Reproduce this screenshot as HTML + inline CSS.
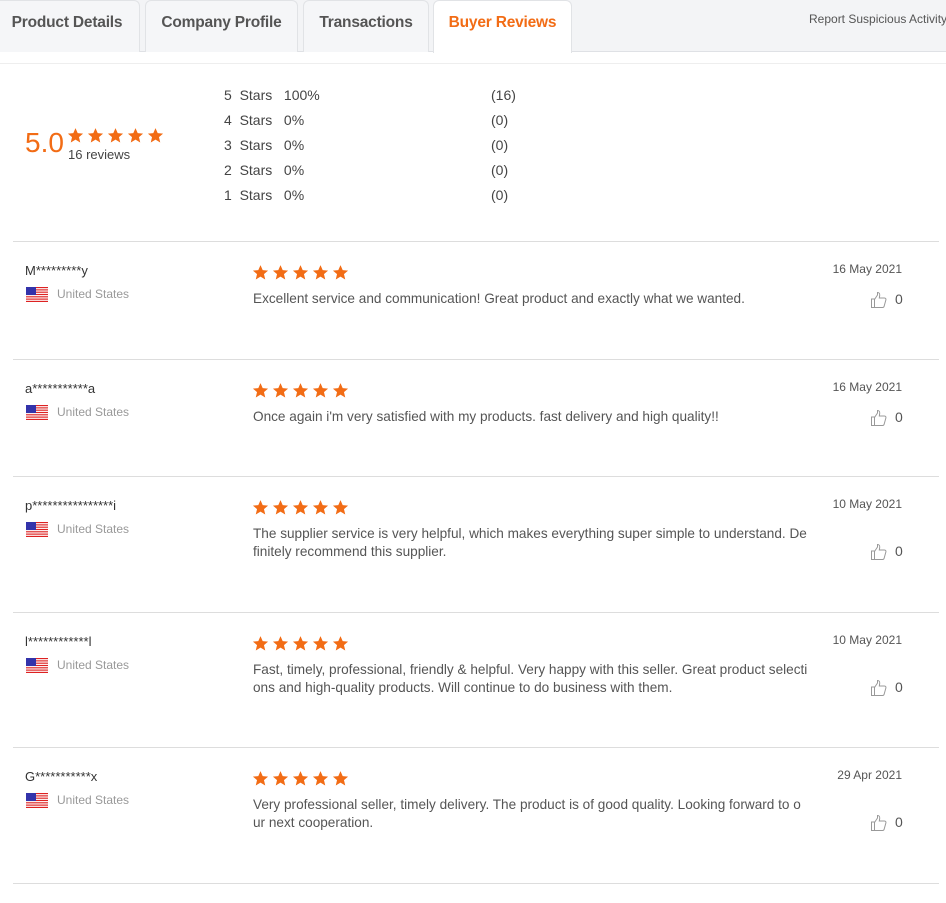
<!DOCTYPE html>
<html><head><meta charset="utf-8"><style>
*{margin:0;padding:0;box-sizing:border-box}
body{width:946px;height:903px;background:#fff;font-family:"Liberation Sans",Arial,sans-serif;position:relative;overflow:hidden;color:#333}
.a{position:absolute;white-space:nowrap}
.topbar{position:absolute;left:0;top:0;width:946px;height:52px;background:#f3f4f6;border-bottom:1px solid #dfe1e5}
.tab{position:absolute;top:0;height:52px;background:#f5f6f8;border:1px solid #e1e3e6;border-bottom:none;border-radius:6px 6px 0 0;font-weight:bold;font-size:15.5px;color:#555;text-align:center;line-height:44px;letter-spacing:-0.2px}
.tab.on{background:#fff;color:#f26c15;height:53px}
.line{position:absolute;left:13px;width:926px;height:1px;background:#ddd}
.stars svg{display:inline-block;margin-right:3px}
.nm{font-size:13px;color:#333}
.ct{font-size:12px;color:#999}
.tx{font-size:13.6px;color:#555;line-height:18px}
.dt{font-size:12px;color:#555;right:44px}
.lk{font-size:14px;color:#555}
.dist{font-size:14px;color:#444}
</style></head><body>
<div class="topbar"></div>
<div class="tab" style="left:-6px;width:146px">Product Details</div>
<div class="tab" style="left:145px;width:153px">Company Profile</div>
<div class="tab" style="left:303px;width:126px">Transactions</div>
<div class="tab on" style="left:433px;width:139px">Buyer Reviews</div>
<div class="a" style="left:809px;top:12px;font-size:12px;color:#555">Report Suspicious Activity</div>
<div style="position:absolute;left:0;top:63px;width:946px;height:1px;background:#eee"></div>

<div class="a" style="left:25px;top:127px;font-size:28px;color:#f26c15">5.0</div>
<div class="a stars" style="left:67px;top:127px" id="bigstars"></div>
<div class="a" style="left:68px;top:147px;font-size:13px;color:#444">16 reviews</div>

<div class="a dist" style="left:224px;top:87px">5&nbsp; Stars&nbsp;&nbsp; 100%</div>
<div class="a dist" style="left:224px;top:112px">4&nbsp; Stars&nbsp;&nbsp; 0%</div>
<div class="a dist" style="left:224px;top:137px">3&nbsp; Stars&nbsp;&nbsp; 0%</div>
<div class="a dist" style="left:224px;top:162px">2&nbsp; Stars&nbsp;&nbsp; 0%</div>
<div class="a dist" style="left:224px;top:187px">1&nbsp; Stars&nbsp;&nbsp; 0%</div>
<div class="a dist" style="left:491px;top:87px">(16)</div>
<div class="a dist" style="left:491px;top:112px">(0)</div>
<div class="a dist" style="left:491px;top:137px">(0)</div>
<div class="a dist" style="left:491px;top:162px">(0)</div>
<div class="a dist" style="left:491px;top:187px">(0)</div>

<div id="reviews"></div>
<script>
function star(s){return '<svg width="'+s+'" height="'+s+'" viewBox="0 0 24 24"><path fill="#f26c15" d="M12 1.5l3.1 7.1 7.6.7-5.8 5 1.8 7.5L12 17.8l-6.7 4 1.8-7.5-5.8-5 7.6-.7z"/></svg>';}
function stars(s){var h='';for(var i=0;i<5;i++)h+=star(s);return h;}
document.getElementById('bigstars').innerHTML=stars(17);
var flag='<svg width="22" height="15" viewBox="0 0 22 15"><rect width="22" height="15" fill="#fff"/>'+[0,2,4,6,8,10,12].map(function(y){return '<rect y="'+(y*15/13)+'" width="22" height="1.15" fill="#d22"/>'}).join('')+'<rect width="10" height="8" fill="#33a"/></svg>';
var thumb='<svg width="18" height="18" viewBox="0 0 18 18" fill="none" stroke="#999" stroke-width="1"><path d="M1.5 8h3v8.5h-3zM4.5 8.5l3-4.5V1.5c1.5 0 2.5 1 2.2 3L9.3 7h5.2c1 0 1.7.9 1.4 1.9l-1.8 6.5c-.2.7-.8 1.1-1.5 1.1H4.5"/></svg>';
var R=[
[241,'M*********y','Excellent service and communication! Great product and exactly what we wanted.','16 May 2021',1],
[359,'a***********a','Once again i\'m very satisfied with my products. fast delivery and high quality!!','16 May 2021',1],
[476,'p****************i','The supplier service is very helpful, which makes everything super simple to understand. De<br>finitely recommend this supplier.','10 May 2021',2],
[612,'l************l','Fast, timely, professional, friendly &amp; helpful. Very happy with this seller. Great product selecti<br>ons and high-quality products. Will continue to do business with them.','10 May 2021',2],
[747,'G***********x','Very professional seller, timely delivery. The product is of good quality. Looking forward to o<br>ur next cooperation.','29 Apr 2021',2]];
var h='';
R.forEach(function(r){var y=r[0];
h+='<div class="line" style="top:'+y+'px"></div>';
h+='<div class="a nm" style="left:25px;top:'+(y+22)+'px">'+r[1]+'</div>';
h+='<div class="a" style="left:26px;top:'+(y+46)+'px">'+flag+'</div>';
h+='<div class="a ct" style="left:57px;top:'+(y+46)+'px">United States</div>';
h+='<div class="a stars" style="left:252px;top:'+(y+23)+'px">'+stars(17)+'</div>';
h+='<div class="a tx" style="left:253px;top:'+(y+49)+'px">'+r[2]+'</div>';
h+='<div class="a dt" style="top:'+(y+21)+'px">'+r[3]+'</div>';
var ly=r[4]==1?y+50:y+67;
h+='<div class="a" style="left:870px;top:'+ly+'px">'+thumb+'</div>';
h+='<div class="a lk" style="left:895px;top:'+(ly)+'px">0</div>';
});
h+='<div class="line" style="top:883px"></div>';
document.getElementById('reviews').innerHTML=h;
</script>
</body></html>
